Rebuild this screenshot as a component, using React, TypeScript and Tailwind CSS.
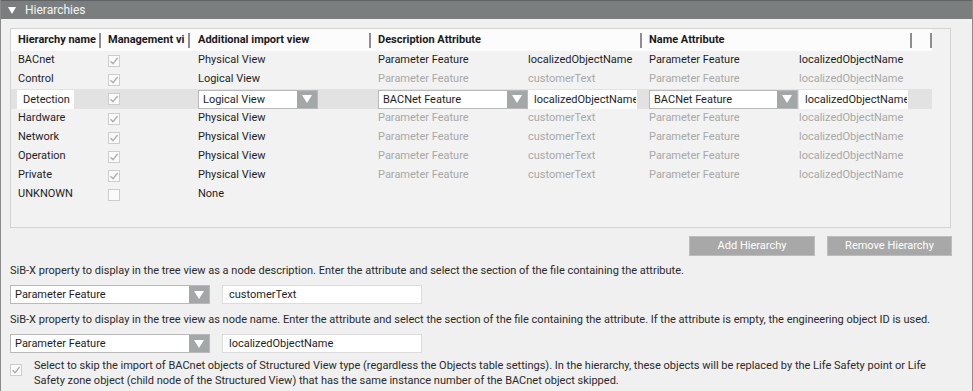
type Row = {
  name: string;
  checked: boolean;
  view: string;
  descFeature?: string;
  descAttr?: string;
  nameFeature?: string;
  nameAttr?: string;
  active?: boolean;
};

const rows: Row[] = [
  { name: 'BACnet', checked: true, view: 'Physical View', descFeature: 'Parameter Feature', descAttr: 'localizedObjectName', nameFeature: 'Parameter Feature', nameAttr: 'localizedObjectName', active: true },
  { name: 'Control', checked: true, view: 'Logical View', descFeature: 'Parameter Feature', descAttr: 'customerText', nameFeature: 'Parameter Feature', nameAttr: 'localizedObjectName' },
  { name: 'Detection', checked: true, view: 'Logical View' },
  { name: 'Hardware', checked: true, view: 'Physical View', descFeature: 'Parameter Feature', descAttr: 'customerText', nameFeature: 'Parameter Feature', nameAttr: 'localizedObjectName' },
  { name: 'Network', checked: true, view: 'Physical View', descFeature: 'Parameter Feature', descAttr: 'customerText', nameFeature: 'Parameter Feature', nameAttr: 'localizedObjectName' },
  { name: 'Operation', checked: true, view: 'Physical View', descFeature: 'Parameter Feature', descAttr: 'customerText', nameFeature: 'Parameter Feature', nameAttr: 'localizedObjectName' },
  { name: 'Private', checked: true, view: 'Physical View', descFeature: 'Parameter Feature', descAttr: 'customerText', nameFeature: 'Parameter Feature', nameAttr: 'localizedObjectName' },
  { name: 'UNKNOWN', checked: false, view: 'None' },
];

function CheckBox({ checked }: { checked: boolean }) {
  return (
    <div className="w-[12px] h-[12px] border border-[#cdcdcd] bg-[#fafafa] flex items-center justify-center">
      {checked && (
        <svg width="10" height="10" viewBox="0 0 10 10">
          <path d="M1.5 5.2 L4 7.6 L8.6 2" fill="none" stroke="#b0b0b0" strokeWidth="1.4" />
        </svg>
      )}
    </div>
  );
}

function Dropdown({ value, className }: { value: string; className: string }) {
  return (
    <div className={`flex h-[19px] bg-white border border-[#b9b9b9] ${className}`}>
      <span className="flex-1 pl-[4px] leading-[17px] text-[#1e1e1e] whitespace-nowrap overflow-hidden">{value}</span>
      <div className="w-[20px] h-full bg-[#a3a7a8] flex items-center justify-center">
        <svg width="10" height="8" viewBox="0 0 10 8">
          <path d="M0 0 H10 L5 8 Z" fill="#ffffff" />
        </svg>
      </div>
    </div>
  );
}

function TextBox({ value, className }: { value: string; className: string }) {
  return (
    <div className={`h-[19px] bg-white border border-[#dcdcdc] pl-[5px] leading-[17px] text-[#1e1e1e] whitespace-nowrap overflow-hidden ${className}`}>
      {value}
    </div>
  );
}

function HeaderBar() {
  return <div className="w-[2px] h-[15px] bg-[#8e8e8e] shrink-0" />;
}

function TableRow({ row }: { row: Row }) {
  const dim = row.active ? 'text-[#1e1e1e]' : 'text-[#a8a8a8]';
  if (row.name === 'Detection') {
    return (
      <div className="flex items-center w-[921px] h-[20px] bg-[#e2e2e2]">
        <div className="w-[90px] pl-[6px]">
          <TextBox value="Detection" className="w-[57px] border-white" />
        </div>
        <div className="w-[90px] pl-[7px]">
          <CheckBox checked />
        </div>
        <div className="w-[180px] pl-[7px]">
          <Dropdown value="Logical View" className="w-[120px]" />
        </div>
        <div className="w-[270px] pl-[7px] flex">
          <Dropdown value="BACNet Feature" className="w-[150px]" />
          <TextBox value="localizedObjectName" className="w-[109px] border-white" />
        </div>
        <div className="pl-[8px] flex">
          <Dropdown value="BACNet Feature" className="w-[149px]" />
          <TextBox value="localizedObjectName" className="w-[109px] ml-[1px] border-white" />
        </div>
      </div>
    );
  }
  return (
    <div className="flex items-center h-[19px] text-[#1e1e1e]">
      <div className="w-[90px] pl-[7px]">{row.name}</div>
      <div className="w-[90px] pl-[7px]">
        <CheckBox checked={row.checked} />
      </div>
      <div className="w-[180px] pl-[7px]">{row.view}</div>
      <div className={`w-[150px] pl-[7px] ${dim}`}>{row.descFeature}</div>
      <div className={`w-[120px] pl-[7px] ${dim}`}>{row.descAttr}</div>
      <div className={`w-[150px] pl-[8px] ${dim}`}>{row.nameFeature}</div>
      <div className={`pl-[8px] ${dim}`}>{row.nameAttr}</div>
    </div>
  );
}

export default function App() {
  return (
    <div className="w-[973px] h-[391px] overflow-hidden bg-[#f0f0f0] border-x border-[#8a8a8a] font-['Roboto',sans-serif] text-[11px] text-[#2a2a2a]">
      {/* Section header */}
      <div className="h-[19px] bg-[#7a7e7f] border-t border-[#5f6364] flex items-center pl-[7px] gap-[9px]">
        <svg width="8" height="7" viewBox="0 0 8 7">
          <path d="M0 0 H8 L4 7 Z" fill="#ffffff" />
        </svg>
        <span className="text-[12px] text-[#f4f4f4]">Hierarchies</span>
      </div>

      <div className="pl-[9px] pt-[9px]">
        {/* Hierarchy table */}
        <div className="w-[941px] h-[200px] border border-[#d3d3d3] bg-[#f2f2f2]">
          <div className="w-[921px] h-[22px] bg-[#fcfcfc] flex items-center font-bold text-[#1a1a1a] whitespace-nowrap">
            <div className="w-[88px] pl-[7px]">Hierarchy name</div>
            <HeaderBar />
            <div className="w-[87px] pl-[7px]">Management vi</div>
            <HeaderBar />
            <div className="w-[179px] pl-[8px]">Additional import view</div>
            <HeaderBar />
            <div className="w-[269px] pl-[7px]">Description Attribute</div>
            <HeaderBar />
            <div className="w-[268px] pl-[7px]">Name Attribute</div>
            <HeaderBar />
            <div className="w-[18px]" />
            <HeaderBar />
          </div>
          {rows.map((r) => (
            <TableRow key={r.name} row={r} />
          ))}
        </div>

        <div className="w-[942px] flex justify-end gap-[12px] mt-[8px]">
          <button className="w-[126px] h-[20px] bg-[#a8a8a8] border border-[#bdbdbd] text-white text-[11px]">Add Hierarchy</button>
          <button className="w-[125px] h-[20px] bg-[#a8a8a8] border border-[#bdbdbd] text-white text-[11px]">Remove Hierarchy</button>
        </div>

        <p className="mt-[7px] leading-[15px]">
          SiB-X property to display in the tree view as a node description. Enter the attribute and select the section of the file containing the attribute.
        </p>
        <div className="flex gap-[12px] mt-[7px]">
          <Dropdown value="Parameter Feature" className="w-[200px]" />
          <TextBox value="customerText" className="w-[200px] pl-[6px]" />
        </div>

        <p className="mt-[8px] leading-[15px]">
          SiB-X property to display in the tree view as node name. Enter the attribute and select the section of the file containing the attribute. If the attribute is empty, the engineering object ID is used.
        </p>
        <div className="flex gap-[12px] mt-[7px]">
          <Dropdown value="Parameter Feature" className="w-[200px]" />
          <TextBox value="localizedObjectName" className="w-[200px] pl-[6px]" />
        </div>

        <div className="flex gap-[12px] mt-[5px]">
          <div className="pt-[6px]">
            <CheckBox checked />
          </div>
          <p className="w-[900px] leading-[15px]">
            Select to skip the import of BACnet objects of Structured View type (regardless the Objects table settings). In the hierarchy, these objects will be replaced by the Life Safety point or Life Safety zone object (child node of the Structured View) that has the same instance number of the BACnet object skipped.
          </p>
        </div>
      </div>
    </div>
  );
}
